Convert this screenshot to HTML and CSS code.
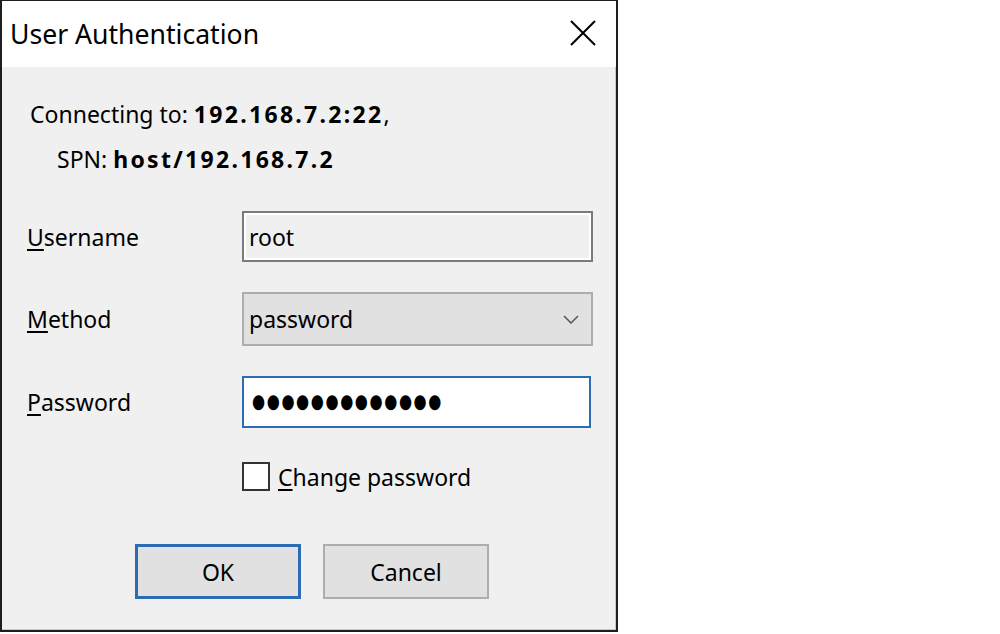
FILE: index.html
```html
<!DOCTYPE html>
<html>
<head>
<meta charset="utf-8">
<link rel="stylesheet" href="styles.css">
</head>
<body>
<div class="dialog">
  <div class="titlebar">
    <span class="title">User Authentication</span>
    <svg class="close" width="26" height="26" viewBox="0 0 26 26"><path d="M1 1 L25 25 M25 1 L1 25" stroke="#000" stroke-width="2" fill="none"/></svg>
  </div>
  <div class="content">
    <div class="info">
      <div class="line1">Connecting to: <b>192.168.7.2:22</b>,</div>
      <div class="line2">SPN: <b>host/192.168.7.2</b></div>
    </div>
    <div class="form">
      <label class="label"><u>U</u>sername</label>
      <div class="field readonly">root</div>
      <label class="label"><u>M</u>ethod</label>
      <div class="field combo">password
        <svg class="chev" width="16" height="9" viewBox="0 0 16 9"><path d="M1 1 L8 8 L15 1" stroke="#555" stroke-width="1.5" fill="none"/></svg>
      </div>
      <label class="label"><u>P</u>assword</label>
      <div class="field focused"><span class="dots">●●●●●●●●●●●●●</span></div>
      <div></div>
      <div class="check"><span class="box"></span><span class="checklabel"><u>C</u>hange password</span></div>
    </div>
    <div class="buttons">
      <div class="btn default">OK</div>
      <div class="btn">Cancel</div>
    </div>
  </div>
</div>
</body>
</html>
```
FILE: styles.css
```css
html, body {
  margin: 0;
  padding: 0;
  background: #fff;
}
body {
  font-family: "Noto Sans", "Open Sans", sans-serif;
  color: #000;
}
.dialog {
  width: 614px;
  height: 629px;
  border: 2px solid #1e1e1e;
  border-top-width: 1px;
  background: #f0f0f0;
  box-shadow: inset -1px -1px 0 #c8c8c8;
  display: flex;
  flex-direction: column;
  box-sizing: content-box;
}
.titlebar {
  height: 66px;
  background: #fff;
  display: flex;
  align-items: center;
  justify-content: space-between;
  padding: 0 20px 0 8px;
}
.title {
  font-size: 26.6px;
  margin-top: -1px;
}
.close {
  margin-top: -3px;
}
.content {
  padding-left: 25px;
  font-size: 23px;
}
.info {
  margin-top: 25px;
  line-height: 45px;
}
.info b {
  letter-spacing: 2.3px;
}
.line1 {
  padding-left: 3px;
}
.line2 {
  padding-left: 30px;
}
.form {
  margin-top: 29px;
  display: grid;
  grid-template-columns: 215px 351px;
  grid-template-rows: 51px 54px 52px 33px;
  row-gap: 30px;
  align-items: center;
}
.form > .check {
  align-self: end;
}
.label {
  display: block;
}
u {
  text-decoration-thickness: 2px;
  text-underline-offset: 3px;
}
.field {
  height: 100%;
  box-sizing: border-box;
  display: flex;
  align-items: center;
  padding-left: 5px;
}
.readonly {
  border: 2px solid #7a7a7a;
  box-shadow: inset 0 0 0 2px #fff;
  background: #f0f0f0;
}
.combo {
  border: 2px solid #adadad;
  background: #e1e1e1;
  justify-content: space-between;
  padding-right: 12px;
}
.chev {
  margin-top: 1px;
}
.focused {
  border: 2px solid #2c6cb4;
  background: #fff;
  width: 349px;
  padding-left: 8px;
}
.dots {
  font-family: "DejaVu Sans", sans-serif;
  font-size: 15px;
  letter-spacing: 1.6px;
  transform: scaleY(1.3);
  display: inline-block;
}
.check {
  display: flex;
  align-items: center;
  height: 29px;
}
.box {
  width: 28px;
  height: 29px;
  box-sizing: border-box;
  border: 2px solid #333;
  background: #fff;
  margin-right: 8px;
}
.buttons {
  margin-top: 53px;
  display: flex;
  gap: 22px;
  padding-left: 108px;
}
.btn {
  width: 166px;
  height: 55px;
  box-sizing: border-box;
  border: 2px solid #adadad;
  background: #e1e1e1;
  display: flex;
  align-items: center;
  justify-content: center;
}
.btn.default {
  border: 3px solid #2c6cb4;
}
```
